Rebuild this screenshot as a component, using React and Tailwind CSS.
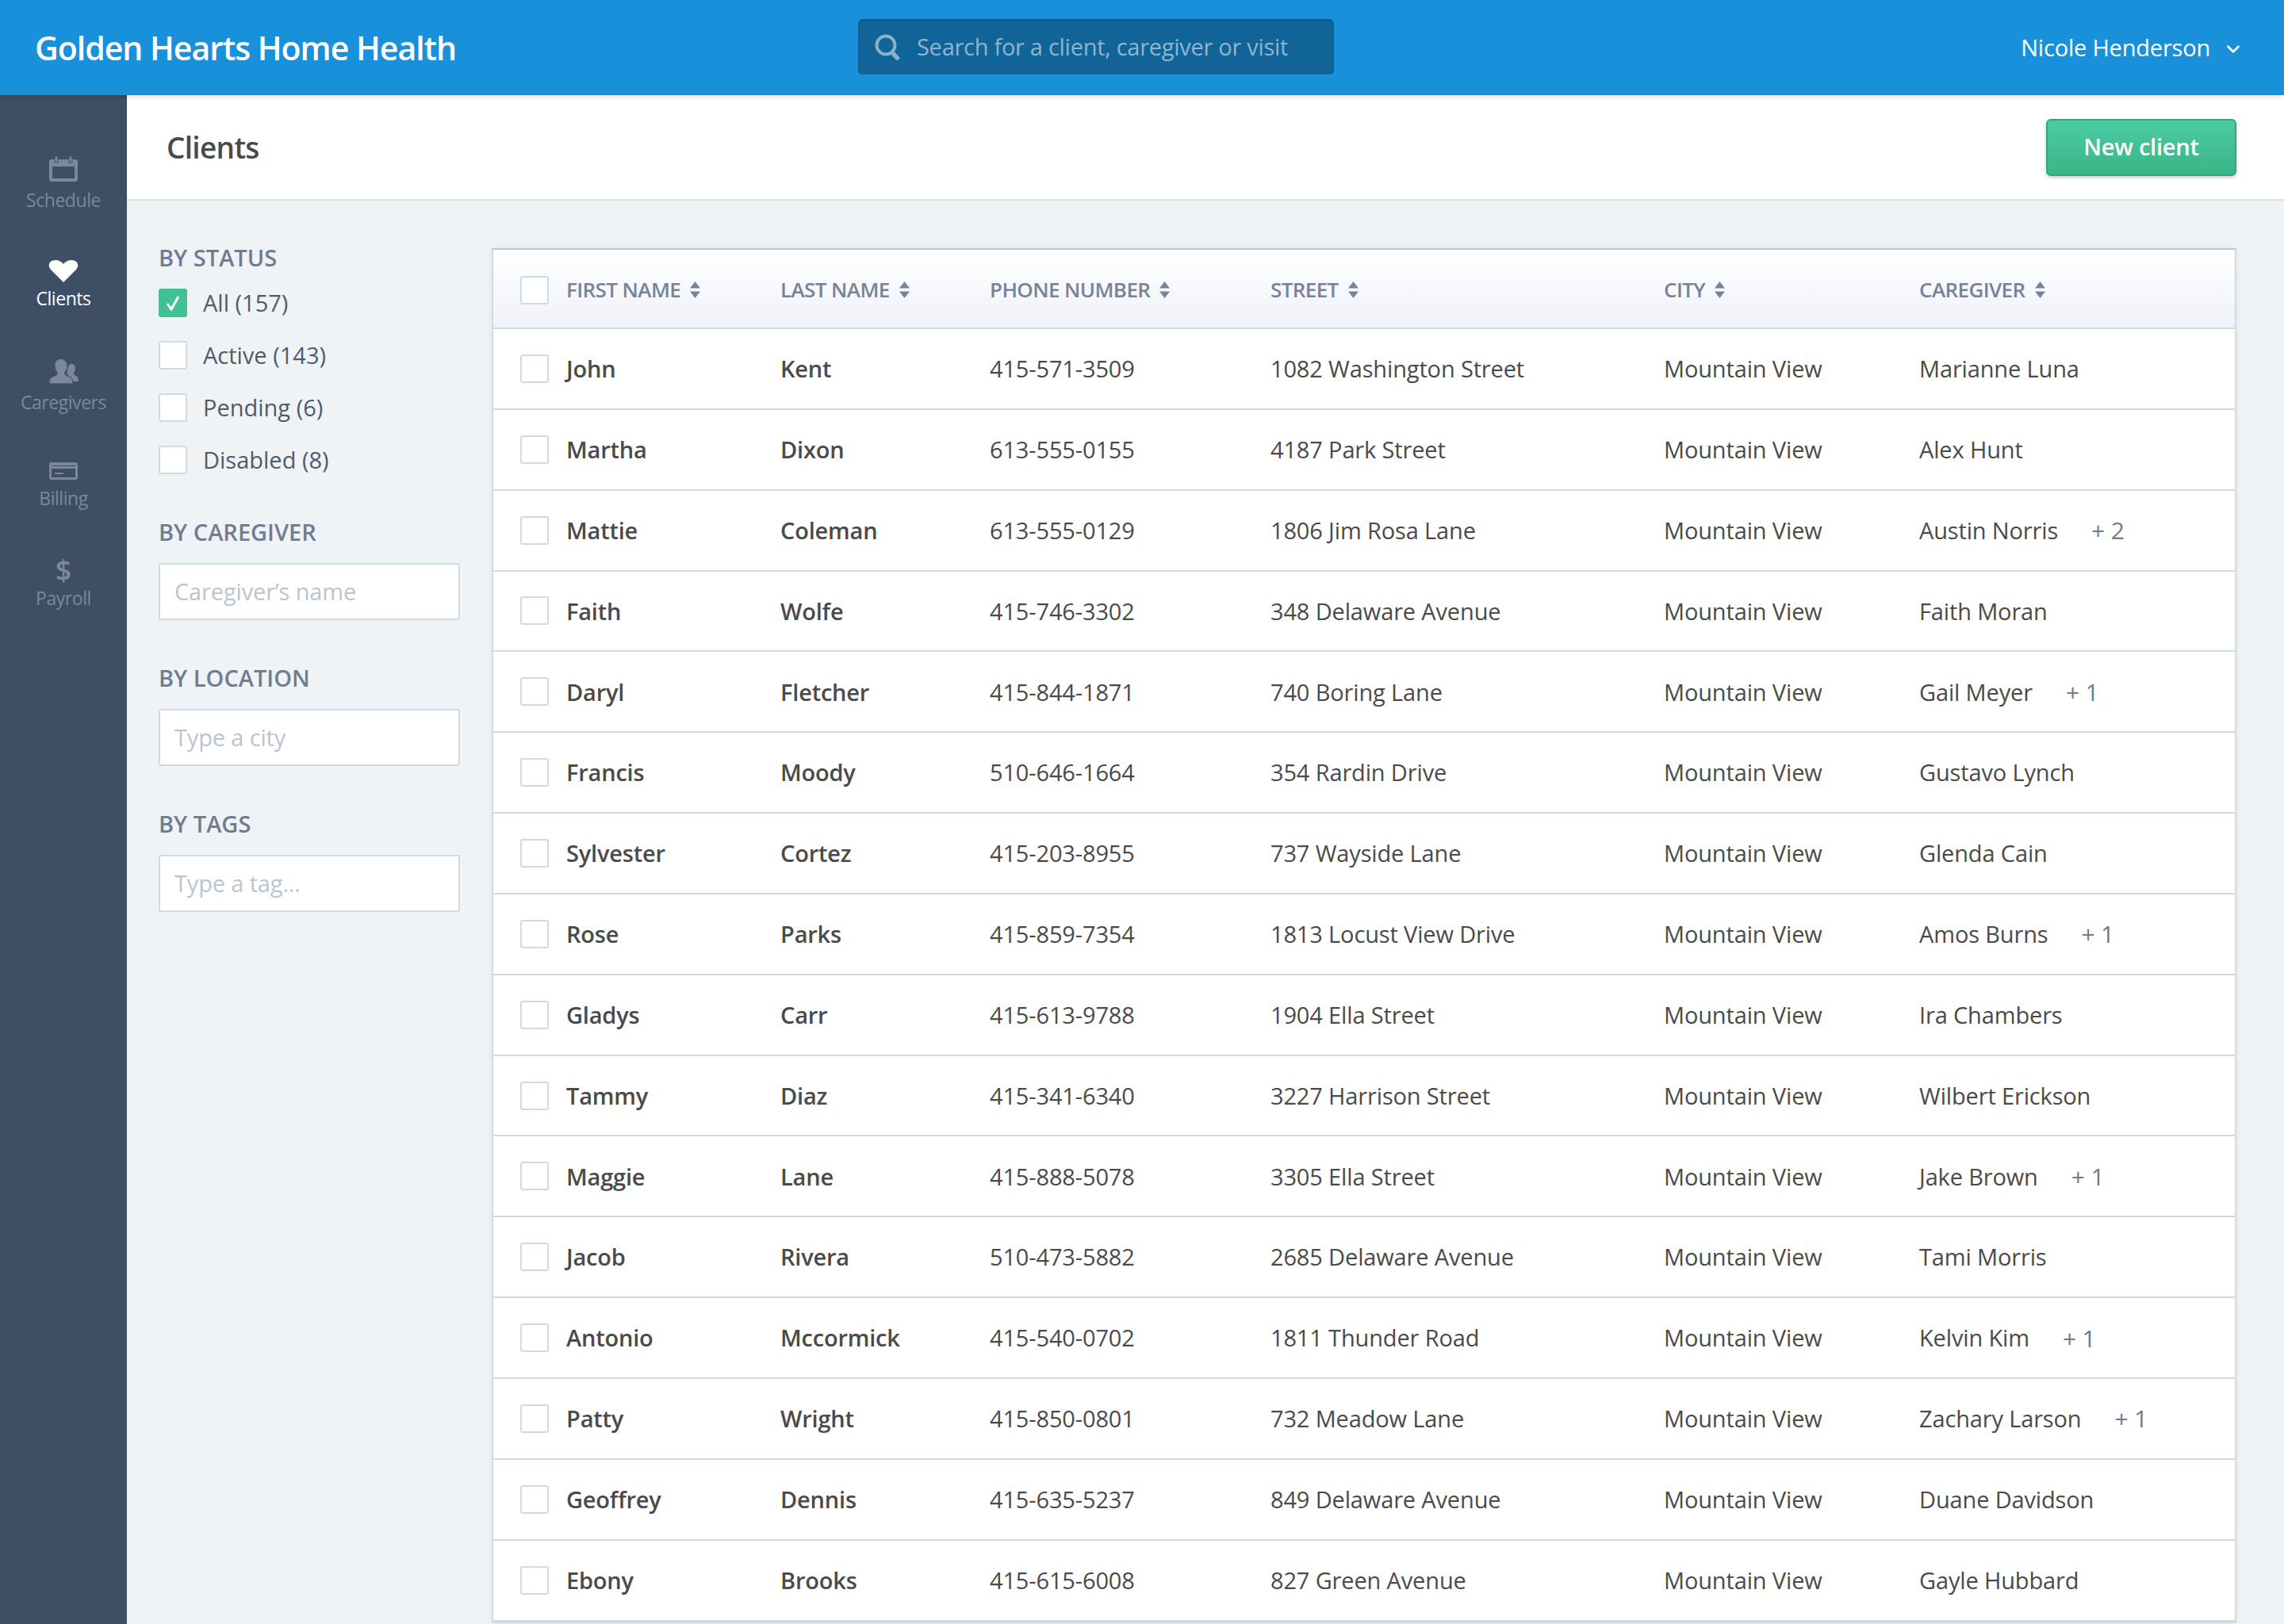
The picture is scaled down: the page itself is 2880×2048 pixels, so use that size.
import { ChevronDown } from 'lucide-react';

const clients = [
  ['John', 'Kent', '415-571-3509', '1082 Washington Street', 'Marianne Luna', ''],
  ['Martha', 'Dixon', '613-555-0155', '4187 Park Street', 'Alex Hunt', ''],
  ['Mattie', 'Coleman', '613-555-0129', '1806 Jim Rosa Lane', 'Austin Norris', '+ 2'],
  ['Faith', 'Wolfe', '415-746-3302', '348 Delaware Avenue', 'Faith Moran', ''],
  ['Daryl', 'Fletcher', '415-844-1871', '740 Boring Lane', 'Gail Meyer', '+ 1'],
  ['Francis', 'Moody', '510-646-1664', '354 Rardin Drive', 'Gustavo Lynch', ''],
  ['Sylvester', 'Cortez', '415-203-8955', '737 Wayside Lane', 'Glenda Cain', ''],
  ['Rose', 'Parks', '415-859-7354', '1813 Locust View Drive', 'Amos Burns', '+ 1'],
  ['Gladys', 'Carr', '415-613-9788', '1904 Ella Street', 'Ira Chambers', ''],
  ['Tammy', 'Diaz', '415-341-6340', '3227 Harrison Street', 'Wilbert Erickson', ''],
  ['Maggie', 'Lane', '415-888-5078', '3305 Ella Street', 'Jake Brown', '+ 1'],
  ['Jacob', 'Rivera', '510-473-5882', '2685 Delaware Avenue', 'Tami Morris', ''],
  ['Antonio', 'Mccormick', '415-540-0702', '1811 Thunder Road', 'Kelvin Kim', '+ 1'],
  ['Patty', 'Wright', '415-850-0801', '732 Meadow Lane', 'Zachary Larson', '+ 1'],
  ['Geoffrey', 'Dennis', '415-635-5237', '849 Delaware Avenue', 'Duane Davidson', ''],
  ['Ebony', 'Brooks', '415-615-6008', '827 Green Avenue', 'Gayle Hubbard', ''],
];

function Box({ checked }) {
  if (checked) {
    return (
      <span className="flex h-[36px] w-[36px] shrink-0 items-center justify-center rounded-[3px] bg-[#41c093]">
        <svg width="18" height="20" viewBox="0 0 18 20" fill="none" stroke="#fff" strokeWidth="3">
          <path d="M2 11l5 7L16 2" />
        </svg>
      </span>
    );
  }
  return <span className="block h-[36px] w-[36px] shrink-0 rounded-[3px] border-2 border-[#cfdbe3] bg-white" />;
}

function SortIcon() {
  return (
    <svg width="13" height="21" viewBox="0 0 13 21" fill="#76839a" className="ml-[12px] shrink-0">
      <path d="M6.500 0L13 8.500H0z" />
      <path d="M6.500 21L0 12.500h13z" />
    </svg>
  );
}

function NavItem({ label, active, icon, labelGap }) {
  return (
    <div className={`flex flex-col items-center ${active ? 'text-white' : 'text-[#7a8899]'}`}>
      {icon}
      <span className={`text-[23px] leading-[34px] font-medium tracking-[-0.45px] ${labelGap}`}>{label}</span>
    </div>
  );
}

function FilterTitle({ children, className }) {
  return (
    <h3 className={`text-[29px] leading-[38px] font-semibold text-[#6f7c93] ${className}`}>
      {children}
    </h3>
  );
}

function FilterInput({ placeholder }) {
  return (
    <div className="mt-[20px] flex h-[72px] w-[380px] items-center rounded-[3px] border-2 border-[#cfdbe3] bg-white pl-[18px] text-[29px] tracking-[-0.15px] text-[#bcc4d2]">
      {placeholder}
    </div>
  );
}

function Row({ row }) {
  return (
    <div className="flex h-[101.85px] items-center border-b-2 border-[#cfdbe3] text-[29px] tracking-[-0.15px] text-[#4a4a4a]">
      <div className="w-[92px] pl-[34px]">
        <Box />
      </div>
      <div className="w-[270px] font-semibold tracking-[-0.2px]">{row[0]}</div>
      <div className="w-[264px] font-semibold tracking-[-0.2px]">{row[1]}</div>
      <div className="w-[354px]">{row[2]}</div>
      <div className="w-[496px]">{row[3]}</div>
      <div className="w-[322px]">Mountain View</div>
      <div className="flex items-center">
        {row[4]}
        {row[5] && <span className="ml-[42px] text-[30px] font-medium text-[#6b7a90]">{row[5]}</span>}
      </div>
    </div>
  );
}

function HeadCell({ label, className }) {
  return (
    <div className={`flex items-center ${className}`}>
      {label}
      <SortIcon />
    </div>
  );
}

export default function App() {
  return (
    <div className="flex h-[2048px] w-[2880px] flex-col overflow-hidden bg-[#eff3f6] font-['Open_Sans',sans-serif]">
      <header className="relative z-10 flex h-[120px] shrink-0 items-center bg-[#1990da] pl-[44px] pr-[51px] text-white shadow-[0_2px_6px_rgba(0,0,0,0.15)]">
        <div className="mt-[2px] w-[1038px] text-[41px] font-semibold tracking-[-1px]">Golden Hearts Home Health</div>
        <div className="flex h-[72px] w-[600px] items-center rounded-[6px] border-b-2 border-[#2a8fcf] bg-[#106497] pl-[21px] shadow-[inset_0_2px_2px_rgba(0,0,0,0.1)]">
          <svg width="33" height="33" viewBox="0 0 33 33" fill="none" stroke="#8ab0ca">
            <circle cx="14" cy="14" r="11.500" strokeWidth="4" />
            <path d="M22 23l8 9" strokeWidth="5.500" />
          </svg>
          <span className="ml-[20px] text-[29px] tracking-[-0.28px] text-[#8fb5cf]">Search for a client, caregiver or visit</span>
        </div>
        <div className="ml-auto flex items-center">
          <span className="text-[29px] tracking-[-0.2px]">Nicole Henderson</span>
          <ChevronDown size={26} strokeWidth={2.5} className="mt-[4px] ml-[16px]" />
        </div>
      </header>

      <div className="flex min-h-0 flex-1">
        <nav className="flex w-[160px] shrink-0 flex-col gap-[59px] bg-[#3d4e65] pt-[77px]">
          <NavItem
            label="Schedule"
            labelGap="mt-[6px]"
            icon={
              <svg width="36" height="32" viewBox="0 0 36 32" fill="#7a8899">
                <path fillRule="evenodd" d="M3 4h30a3 3 0 013 3v22a3 3 0 01-3 3H3a3 3 0 01-3-3V7a3 3 0 013-3zM4 13v15h28V13z" />
                <path d="M7 0h4v8H7zM25 0h4v8h-4z" stroke="#3d4e65" strokeWidth="1" />
              </svg>
            }
          />
          <NavItem
            label="Clients"
            active
            labelGap="mt-[3px]"
            icon={
              <svg width="38" height="28" viewBox="0 0 38 28" fill="#fff">
                <path d="M19 28L3 12C-2 6 2 0 9 0c4 0 8 2 10 5 2-3 6-5 10-5 7 0 11 6 6 12z" />
              </svg>
            }
          />
          <NavItem
            label="Caregivers"
            labelGap="mt-[6px]"
            icon={
              <svg width="37" height="32" viewBox="0 0 37 32" fill="#7a8899">
                <path d="M28 7c3 0 5 2 5 5 0 3-1 4-2 6v2c1 2 6 2 6 7v2h-9c0-4-3-7-6-9l1-3c0-6 2-10 5-10z" />
                <path
                  d="M14 0c-1 1-3 1-5 3-2 2-2 5-2 7 0 3 1 5 3 7v3c-1 2-10 3-10 9v3h30v-3c0-6-9-7-10-9v-3c2-2 3-4 3-7 0-5-3-9-9-10z"
                  stroke="#3d4e65"
                  strokeWidth="1"
                />
              </svg>
            }
          />
          <NavItem
            label="Billing"
            labelGap="mt-[6px]"
            icon={
              <svg width="36" height="22" viewBox="0 0 36 22" fill="#7a8899">
                <path fillRule="evenodd" d="M3 0h30a3 3 0 013 3v16a3 3 0 01-3 3H3a3 3 0 01-3-3V3a3 3 0 013-3zM3 8v11h30V8zM3 4v1h30V4z" />
                <path d="M7 13h11v2H7z" />
              </svg>
            }
          />
          <div className="flex flex-col items-center text-[#7a8899]">
            <span className="h-[29px] text-[36px] leading-[29px] font-semibold">$</span>
            <span className="mt-[4px] text-[23px] leading-[34px] font-medium tracking-[-0.45px]">Payroll</span>
          </div>
        </nav>

        <div className="flex min-w-0 flex-1 flex-col">
          <div className="flex h-[133px] shrink-0 items-center justify-between border-b-2 border-[#d8dee3] bg-white pr-[60px] pl-[50px]">
            <h1 className="text-[37px] font-semibold tracking-[-0.7px] text-[#4a4a4a]">Clients</h1>
            <button className="flex h-[72px] w-[240px] items-center justify-center rounded-[6px] border-2 border-[#36a57f] bg-gradient-to-b from-[#4ccba3] to-[#3ab587] pb-[2px] text-[29px] font-semibold tracking-[-0.25px] text-white shadow-[0_2px_4px_rgba(0,0,0,0.2)]">
              New client
            </button>
          </div>

          <div className="flex flex-1">
            <aside className="w-[460px] shrink-0 pt-[53px] pl-[40px]">
              <FilterTitle>BY STATUS</FilterTitle>
              <div className="mt-[20px] flex flex-col gap-[30px]">
                {[['All (157)', true], ['Active (143)'], ['Pending (6)'], ['Disabled (8)']].map(([label, on]) => (
                  <label key={label} className="flex h-[36px] items-center text-[29px] leading-[36px] text-[#4f5b6d]">
                    <Box checked={on} />
                    <span className="ml-[20px] -mt-[1px]">{label}</span>
                  </label>
                ))}
              </div>
              <FilterTitle className="mt-[54px]">BY CAREGIVER</FilterTitle>
              <FilterInput placeholder="Caregiver’s name" />
              <FilterTitle className="mt-[54px]">BY LOCATION</FilterTitle>
              <FilterInput placeholder="Type a city" />
              <FilterTitle className="mt-[54px]">BY TAGS</FilterTitle>
              <FilterInput placeholder="Type a tag..." />
            </aside>

            <div className="mt-[60px] h-[1734px] w-[2200px] border-2 border-x-[#cfdbe3] border-t-[#b9c7d3] border-b-[#cfdbe3] bg-white shadow-[0_0_10px_rgba(0,0,0,0.06)]">
              <div className="flex h-[100px] items-center border-b-2 border-[#cfdbe3] bg-gradient-to-b from-white to-[#eff2f9] pt-[3px] text-[26px] font-semibold tracking-[-0.6px] text-[#76839a]">
                <div className="w-[92px] pl-[34px]">
                  <Box />
                </div>
                <HeadCell label="FIRST NAME" className="w-[270px]" />
                <HeadCell label="LAST NAME" className="w-[264px]" />
                <HeadCell label="PHONE NUMBER" className="w-[354px]" />
                <HeadCell label="STREET" className="w-[496px]" />
                <HeadCell label="CITY" className="w-[322px]" />
                <HeadCell label="CAREGIVER" />
              </div>
              {clients.map((row) => (
                <Row key={row[0]} row={row} />
              ))}
            </div>
          </div>
        </div>
      </div>
    </div>
  );
}
